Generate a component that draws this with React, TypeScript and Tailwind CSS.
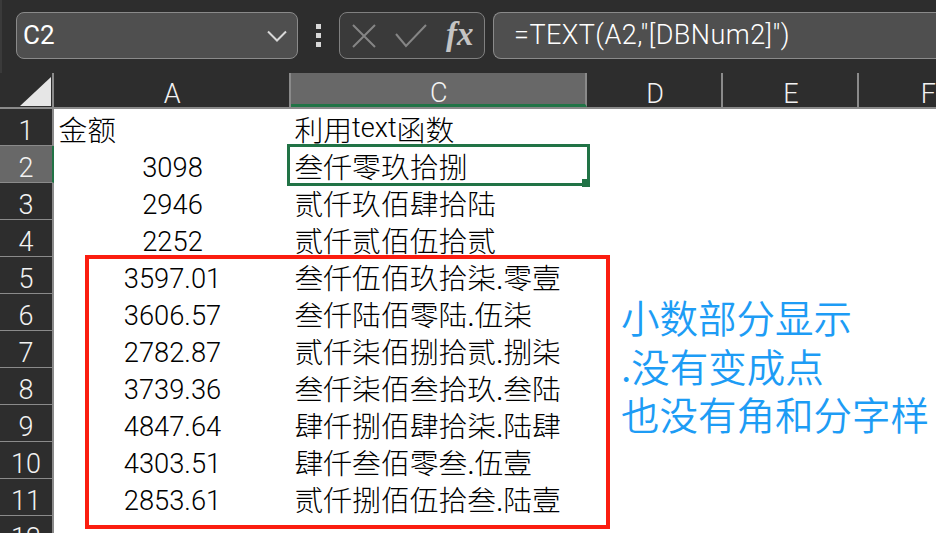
const cjk = '"Noto Sans CJK SC", sans-serif';
const rows: [string, string, string][] = [
  ['1', '', ''],
  ['2', '3098', '叁仟零玖拾捌'],
  ['3', '2946', '贰仟玖佰肆拾陆'],
  ['4', '2252', '贰仟贰佰伍拾贰'],
  ['5', '3597.01', '叁仟伍佰玖拾柒.零壹'],
  ['6', '3606.57', '叁仟陆佰零陆.伍柒'],
  ['7', '2782.87', '贰仟柒佰捌拾贰.捌柒'],
  ['8', '3739.36', '叁仟柒佰叁拾玖.叁陆'],
  ['9', '4847.64', '肆仟捌佰肆拾柒.陆肆'],
  ['10', '4303.51', '肆仟叁佰零叁.伍壹'],
  ['11', '2853.61', '贰仟捌佰伍拾叁.陆壹'],
  ['12', '', ''],
];

function ColHead({ label, w, active }: { label: string; w: string; active?: boolean }) {
  return (
    <div className={`${w} h-full flex items-center justify-center border-r-2 border-[#8a8a8a] text-[27px] font-light pt-[9px] pl-[2px] text-[#f2f2f2] ${active ? 'bg-[#686868] border-b-[3px] border-b-[#217346]' : ''}`}>
      {label}
    </div>
  );
}

export default function App() {
  return (
    <div className="w-[936px] h-[533px] overflow-hidden bg-white relative font-['Roboto',sans-serif]">
      <div className="h-[73px] bg-[#2d2d2d] flex items-start pt-[12px] pl-[14px] border-l-2 border-[#3a3a3a]">
        <div className="w-[282px] h-[47px] rounded-[8px] bg-[#4f4f4f] border border-[#8a8a8a] flex items-center justify-between pl-[6px] pr-[10px] text-[26px] text-white">
          <span>C2</span>
          <svg width="20" height="12" viewBox="0 0 20 12" fill="none" stroke="#d8d8d8" strokeWidth="2"><path d="M1 1.5 L10 10.5 L19 1.5" /></svg>
        </div>
        <div className="w-[41px] h-[47px] flex flex-col items-center justify-center gap-[4px]">
          <i className="block w-[5px] h-[5px] bg-[#d8d8d8]" />
          <i className="block w-[5px] h-[5px] bg-[#d8d8d8]" />
          <i className="block w-[5px] h-[5px] bg-[#d8d8d8]" />
        </div>
        <div className="w-[146px] h-[47px] rounded-[8px] bg-[#3a3a3a] border border-[#808080] flex items-center pl-[12px] gap-[19px]">
          <svg width="24" height="24" viewBox="0 0 24 24" fill="none" stroke="#858585" strokeWidth="2"><path d="M1 1 L23 23 M23 1 L1 23" /></svg>
          <svg width="32" height="24" viewBox="0 0 32 24" fill="none" stroke="#858585" strokeWidth="2"><path d="M1 10 L11 22 L31 1" /></svg>
          <span className="font-['Liberation_Serif',serif] italic font-bold text-[#c4c4c4] text-[33px] leading-none -mt-[3px]">fx</span>
        </div>
        <div className="ml-[8px] flex-1 h-[47px] rounded-l-[8px] bg-[#4f4f4f] border border-r-0 border-[#8a8a8a] flex items-center pl-[20px] text-[27px] tracking-[0.45px] font-light text-white">
          =TEXT(A2,"[DBNum2]")
        </div>
      </div>

      <div className="h-[36px] bg-[#2d2d2d] flex border-b-2 border-[#8a8a8a]">
        <div className="w-[54px] h-full border-r-2 border-[#8a8a8a] relative">
          <svg className="absolute left-[20px] top-[4px]" width="31" height="29" viewBox="0 0 31 29"><path d="M31 0 V29 H0 Z" fill="#e6e6e6" /></svg>
        </div>
        <ColHead label="A" w="w-[237px]" />
        <ColHead label="C" w="w-[297px]" active />
        <ColHead label="D" w="w-[136px]" />
        <ColHead label="E" w="w-[136px]" />
        <div className="flex-1 flex items-center pl-[62px] text-[27px] font-light pt-[9px] text-[#f2f2f2]">F</div>
      </div>

      <div className="flex flex-col">
        {rows.map(([n, a, c], i) => (
          <div key={n} className="h-[37px] flex">
            <div className={`w-[54px] shrink-0 flex items-center justify-center text-[27px] font-light pt-[9px] border-r-2 border-b border-[#8a8a8a] text-[#f2f2f2] ${n === '2' ? 'bg-[#686868] border-r-[#217346]' : 'bg-[#2d2d2d]'}`}>{n}</div>
            <div className="w-[236px] shrink-0 flex items-center text-black">
              {i === 0 ? (
                <span className="pl-[4.5px] pt-[3px] text-[28.8px] font-light" style={{ fontFamily: cjk }}>金额</span>
              ) : (
                <span className="w-[236px] text-center text-[27.3px] font-light pt-[7px] pl-[1px]">{a}</span>
              )}
            </div>
            <div className="pl-[4.5px] pt-[2px] flex items-center whitespace-nowrap text-black text-[28.8px] font-light" style={{ fontFamily: cjk }}>
              {i === 0 ? <>利用<span className="font-['Roboto'] text-[27px] font-light">text</span>函数</> : c}
            </div>
          </div>
        ))}
      </div>

      <div className="absolute left-[287px] top-[144px] w-[303px] h-[42px] border-[3px] border-[#217346]">
        <i className="absolute -right-[3px] -bottom-[4px] w-[8px] h-[8px] bg-[#217346] border-0" />
      </div>
      <div className="absolute left-[85px] top-[255px] w-[525px] h-[274px] border-[4px] border-[#fb1d10]" />
      <div className="absolute left-[621px] top-[292px] text-[38.5px] leading-[48.5px] font-[350] text-[#1d9cf5] whitespace-nowrap" style={{ fontFamily: cjk }}>
        <div>小数部分显示</div>
        <div>.没有变成点</div>
        <div>也没有角和分字样</div>
      </div>
    </div>
  );
}
